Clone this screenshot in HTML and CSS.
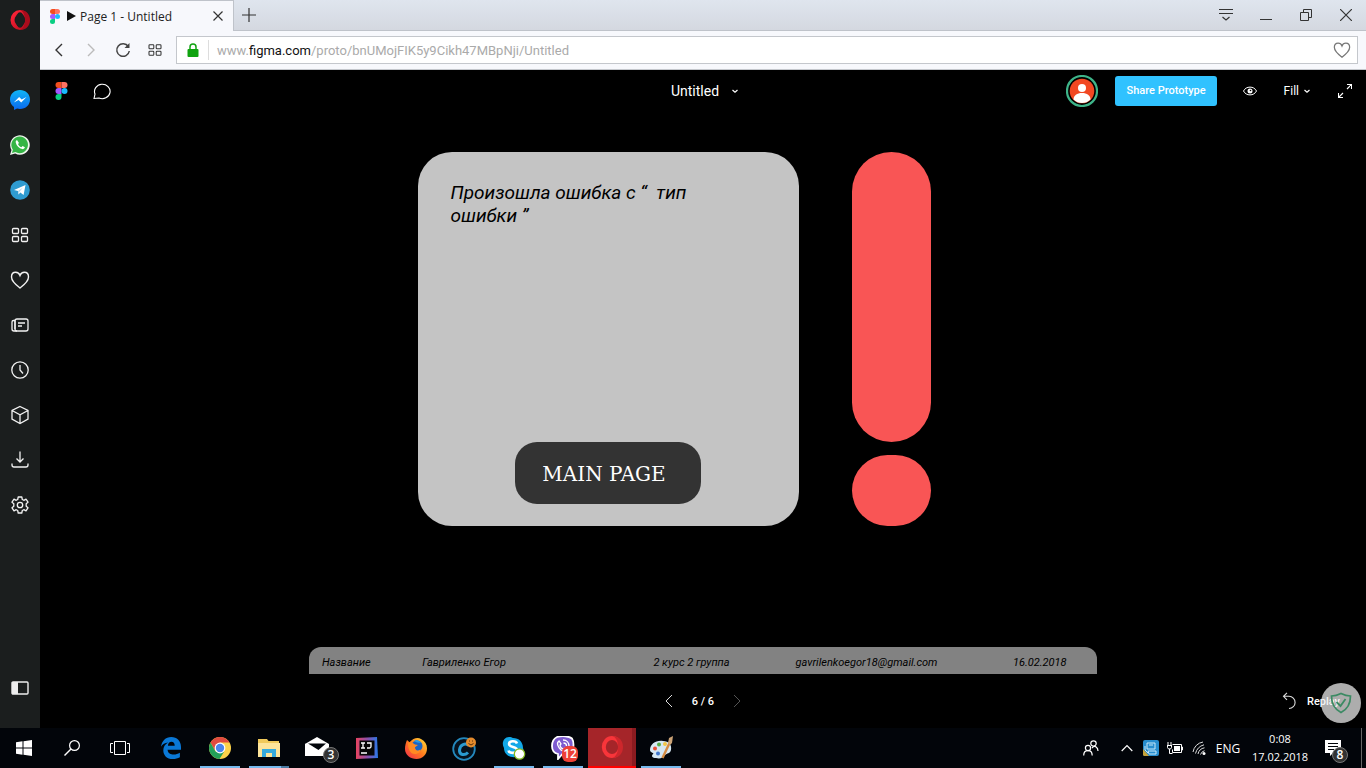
FILE: index.html
```
<!DOCTYPE html>
<html lang="ru">
<head>
<meta charset="utf-8">
<meta name="viewport" content="width=device-width, initial-scale=1">
<title>Page 1 - Untitled</title>
<link rel="stylesheet" href="styles.css">
</head>
<body>
<svg class="defs" aria-hidden="true">
  <defs>
    <linearGradient id="opera-ring" x1="0" y1="0" x2="1" y2="1"><stop offset="0" stop-color="#ff2438"/><stop offset="1" stop-color="#b80b1d"/></linearGradient>
    <linearGradient id="messenger" x1="0" y1="0" x2="0" y2="1"><stop offset="0" stop-color="#10b5f5"/><stop offset="1" stop-color="#0a68f0"/></linearGradient>
    <linearGradient id="ij" x1="0" y1="0" x2="1" y2="0"><stop offset="0" stop-color="#e8435f"/><stop offset=".5" stop-color="#8f4fa8"/><stop offset="1" stop-color="#2878e8"/></linearGradient>
    <linearGradient id="fox" x1="0" y1="1" x2="1" y2="0"><stop offset="0" stop-color="#f0284e"/><stop offset=".5" stop-color="#ff7a1e"/><stop offset="1" stop-color="#ffe23a"/></linearGradient>
    <symbol id="figma" viewBox="0 0 12 18">
      <path d="M3 0h3v6H3a3 3 0 0 1 0-6z" fill="#f24e1e"/><path d="M6 0h3a3 3 0 0 1 0 6H6z" fill="#ff7262"/>
      <path d="M3 6h3v6H3a3 3 0 0 1 0-6z" fill="#a259ff"/><circle cx="9" cy="9" r="3" fill="#1abcfe"/>
      <path d="M3 12h3v3a3 3 0 1 1-3-3z" fill="#0acf83"/>
    </symbol>
    <symbol id="down" viewBox="0 0 8 8"><path d="M1.500 3l2.500 2.300L6.500 3" fill="none" stroke="currentColor" stroke-width="1.200"/></symbol>
    <symbol id="heart" viewBox="0 0 20 20"><path d="M10 18C6 15 1.500 11.500 1.500 7c0-2.800 1.800-4.700 4.200-4.700 2 0 3.600 1.200 4.300 3.200.7-2 2.300-3.200 4.300-3.200 2.400 0 4.200 1.900 4.200 4.700 0 4.500-4.500 8-8.500 11z" fill="none" stroke="currentColor" stroke-width="1.400"/></symbol>
    <symbol id="tiles" viewBox="0 0 20 20"><g fill="none" stroke="currentColor" stroke-width="1.300"><rect x="2.500" y="3.500" width="6" height="5" rx="1"/><rect x="11.500" y="3.500" width="6" height="5" rx="1"/><rect x="2.500" y="11.500" width="6" height="5" rx="1"/><rect x="11.500" y="11.500" width="6" height="5" rx="1"/></g></symbol>
  </defs>
</svg>

<div class="window">
  <aside class="sidebar">
    <button class="side-logo" aria-label="Opera"><svg width="20" height="20" viewBox="0 0 20 20"><ellipse cx="10" cy="10" rx="7.500" ry="8" fill="none" stroke="url(#opera-ring)" stroke-width="4"/><path d="M10 0c6 0 10 4 10 10s-4 10-10 10c3-1 5-5 5-10s-2-9-5-10z" fill="#a90c1c"/><ellipse cx="10" cy="10" rx="4.200" ry="7.800" fill="#1b1e1e"/></svg></button>
    <nav class="side-nav">
      <button aria-label="Messenger"><svg width="20" height="20" viewBox="0 0 20 20"><path d="M10 0c5.700 0 10 4.100 10 9.500S15.700 19 10 19c-1 0-2-.1-2.900-.4L4 20v-2.900C1.500 15.300 0 12.600 0 9.500 0 4.100 4.300 0 10 0z" fill="url(#messenger)"/><path d="M3.800 12.500l5.300-5.600 2.600 2.500 4.800-2.500-5.300 5.600-2.600-2.600z" fill="#fff"/></svg></button>
      <button aria-label="WhatsApp"><svg width="20" height="20" viewBox="0 0 20 20"><path d="M0 20l1.500-5A9.800 9.800 0 1 1 5.200 18.600z" fill="#eef5ec"/><path d="M1.900 18.100l1-3.400A8.300 8.300 0 1 1 5.400 17z" fill="#35b545"/><path d="M7 5c-1 .4-1.500 1.500-1.200 2.800.8 3.200 3.200 5.500 6.400 6.300 1.200.2 2.500-.5 2.700-1.800l-2.300-1.300-1.200 1.200C9.700 11.500 8.500 10.300 8 8.900l1-1z" fill="#fff"/></svg></button>
      <button aria-label="Telegram"><svg width="20" height="20" viewBox="0 0 20 20"><circle cx="10" cy="10" r="9.800" fill="#2f9bd0"/><path d="M4 9.900L15.500 5l-1.900 10-3.300-2.400-1.800 1.900-.5-3.400z" fill="#fff"/><path d="M8 11.100l5-3.600-3.500 4.200-1 2.800z" fill="#b5d7ea"/></svg></button>
      <button aria-label="Speed Dial"><svg width="20" height="20"><use href="#tiles"/></svg></button>
      <button aria-label="Bookmarks"><svg width="20" height="20"><use href="#heart"/></svg></button>
      <button aria-label="News"><svg class="line" width="20" height="20" viewBox="0 0 20 20"><rect x="5" y="4" width="13" height="12" rx="2"/><path d="M5 5.500H3.500a1.500 1.500 0 0 0-1.500 1.500v7a2 2 0 0 0 2 2h3M5 5.500V14M8 8h7M8 11h4"/></svg></button>
      <button aria-label="History"><svg class="line" width="20" height="20" viewBox="0 0 20 20"><circle cx="10" cy="10" r="8.200"/><path d="M10 5v5l3 3.500"/></svg></button>
      <button aria-label="Extensions"><svg class="line" width="20" height="20" viewBox="0 0 20 20"><path d="M10 1.500l8 4v8.500l-8 4.500-8-4.500V5.500zM2 5.500l8 4.300 8-4.300M10 9.800v8.700"/></svg></button>
      <button aria-label="Downloads"><svg class="line" width="20" height="20" viewBox="0 0 20 20"><path d="M10 1.500v10M6.500 8.500L10 12l3.500-3.500M2 13.500V15a2 2 0 0 0 2 2h12a2 2 0 0 0 2-2v-1.500"/></svg></button>
      <button aria-label="Settings"><svg class="line" width="20" height="20" viewBox="0 0 20 20"><path d="M8.200 2h3.600l.5 2.500 1.500.8L16 4.200l2 3-1.800 1.500v2.600L18 12.800l-2 3-2.200-1.100-1.500.8-.5 2.500H8.200l-.5-2.500-1.500-.8L4 15.800l-2-3 1.800-1.500V8.700L2 7.200l2-3 2.200 1.100 1.500-.8z" stroke-linejoin="round"/><circle cx="10" cy="10" r="2.700"/></svg></button>
    </nav>
    <button class="side-toggle" aria-label="Toggle sidebar"><svg width="20" height="16" viewBox="0 0 20 16"><rect x="2" y="2" width="16" height="12" rx="1" fill="none" stroke="#eee" stroke-width="1.400"/><path d="M2 2h6v12H2z" fill="#eee"/></svg></button>
  </aside>

  <main class="browser">
    <div class="tab-strip">
      <div class="tab">
        <svg width="10" height="15"><use href="#figma"/></svg>
        <svg class="play" width="10" height="10" viewBox="0 0 10 10"><path d="M1 0l9 5-9 5z" fill="#111"/></svg>
        <span class="tab-title">Page 1 - Untitled</span>
        <button aria-label="Close tab"><svg width="10" height="10" viewBox="0 0 10 10"><path d="M.5.5l9 9m0-9l-9 9" stroke="#333" stroke-width="1.200"/></svg></button>
      </div>
      <button class="new-tab" aria-label="New tab"><svg width="14" height="14" viewBox="0 0 14 14"><path d="M7 0v14M0 7h14" stroke="#333" stroke-width="1.200"/></svg></button>
      <div class="window-buttons">
        <button aria-label="Tab menu"><svg width="14" height="14" viewBox="0 0 14 14"><path d="M0 1.500h14M0 5.500h14M3.500 9L7 12l3.500-3" fill="none" stroke="#333" stroke-width="1.200"/></svg></button>
        <button aria-label="Minimize"><svg width="12" height="12" viewBox="0 0 12 12"><path d="M0 10.500h12" stroke="#333"/></svg></button>
        <button aria-label="Restore"><svg width="12" height="12" viewBox="0 0 12 12"><path d="M.5 3.500h8v8h-8zM3.500 3.500v-3h8v8h-3" fill="none" stroke="#333"/></svg></button>
        <button aria-label="Close"><svg width="12" height="12" viewBox="0 0 12 12"><path d="M0 0l12 12M12 0L0 12" stroke="#333" stroke-width="1.200"/></svg></button>
      </div>
    </div>
    <div class="toolbar">
      <button aria-label="Back"><svg width="16" height="16" viewBox="0 0 16 16"><path d="M11 2L5 8l6 6" fill="none" stroke="#333" stroke-width="1.400"/></svg></button>
      <button aria-label="Forward" disabled><svg width="16" height="16" viewBox="0 0 16 16"><path d="M5 2l6 6-6 6" fill="none" stroke="#bbb" stroke-width="1.400"/></svg></button>
      <button aria-label="Reload"><svg width="16" height="16" viewBox="0 0 16 16"><path d="M13.300 4.500A6.300 6.300 0 1 0 14.300 9" fill="none" stroke="#444" stroke-width="1.500"/><path d="M14.500 1v5h-5z" fill="#444"/></svg></button>
      <button aria-label="Speed Dial"><svg width="16" height="16"><use href="#tiles"/></svg></button>
      <div class="address">
        <svg class="lock" width="12" height="14" viewBox="0 0 12 14"><path d="M3 7V4a3 3 0 0 1 6 0v3" fill="none" stroke="#12a312" stroke-width="1.500"/><rect x=".5" y="6" width="11" height="8" rx="1" fill="#0fa30f"/></svg>
        <div class="url">
          <span class="url-text">www.<b>figma.com</b>/proto/bnUMojFIK5y9Cikh47MBpNji/Untitled</span>
          <input type="text" aria-label="Address">
        </div>
        <button aria-label="Add to bookmarks"><svg width="18" height="18"><use href="#heart"/></svg></button>
      </div>
    </div>

    <section class="prototype">
      <header class="proto-header">
        <div class="proto-left">
          <button aria-label="Figma"><svg width="13" height="18"><use href="#figma"/></svg></button>
          <button aria-label="Comments"><svg width="18" height="17" viewBox="0 0 18 17"><path d="M1 15.500l1-4.500A7.800 7.200 0 1 1 6 15z" fill="none" stroke="#fff" stroke-width="1.100"/></svg></button>
        </div>
        <button class="proto-title">Untitled <svg width="8" height="8"><use href="#down"/></svg></button>
        <div class="proto-right">
          <button class="avatar" aria-label="Account"><svg width="32" height="32" viewBox="0 0 32 32"><circle cx="16" cy="16" r="15" fill="#000" stroke="#3eb489" stroke-width="2.200"/><circle cx="16" cy="16" r="12.300" fill="#f24822"/><circle cx="16" cy="13" r="4" fill="#fff"/><path d="M7.500 24.500c0-4 3.500-6.500 8.500-6.500s8.500 2.500 8.500 6.500a12 12 0 0 1-17 0z" fill="#fff"/></svg></button>
          <button class="share">Share Prototype</button>
          <button class="eye" aria-label="View options"><svg width="14" height="10" viewBox="0 0 14 10"><path d="M.5 5C3-.2 11-.2 13.500 5 11 10.200 3 10.200.5 5z" fill="none" stroke="#fff"/><circle cx="7" cy="5" r="2.500" fill="#fff"/><circle cx="7.500" cy="4.500" r=".8" fill="#000"/></svg></button>
          <button class="fill">Fill <svg width="8" height="8"><use href="#down"/></svg></button>
          <button class="expand" aria-label="Full screen"><svg width="14" height="14" viewBox="0 0 14 14"><path d="M9 .5h4.500V5M13.500.5L9 5M5 13.500H.5V9M.5 13.500L5 9" fill="none" stroke="#fff" stroke-width="1.100"/></svg></button>
        </div>
      </header>

      <div class="canvas">
        <div class="frame">
          <div class="error">
            <div class="card">
              <p>Произошла ошибка с “&nbsp; тип<br>ошибки ”</p>
              <button class="main-page">MAIN PAGE</button>
            </div>
            <div class="mark" role="img" aria-label="!"><span class="mark-stem"></span><span class="mark-dot"></span></div>
          </div>
          <footer class="credits">
            <span>Название</span>
            <span>Гавриленко Егор</span>
            <span>2 курс 2 группа</span>
            <span>gavrilenkoegor18@gmail.com</span>
            <span>16.02.2018</span>
          </footer>
        </div>
      </div>

      <footer class="proto-footer">
        <div class="pager">
          <button aria-label="Previous"><svg width="8" height="14" viewBox="0 0 8 14"><path d="M7 1L1 7l6 6" fill="none" stroke="#ddd"/></svg></button>
          <span>6 / 6</span>
          <button aria-label="Next" disabled><svg width="8" height="14" viewBox="0 0 8 14"><path d="M1 1l6 6-6 6" fill="none" stroke="#555"/></svg></button>
        </div>
        <button class="replay"><svg width="14" height="18" viewBox="0 0 14 18"><path d="M5 .8L1.500 4.300 5 7.800M1.500 4.300H7a6 6 0 0 1 0 12.200" fill="none" stroke="#ddd" stroke-width="1.100"/></svg> Replay</button>
        <button class="guard" aria-label="Protection"><svg width="22" height="22" viewBox="0 0 22 22"><path d="M1.500 4C5 4 8 3 11 1.500 14 3 17 4 20.500 4c0 8-2.500 13-9.500 16.500C4 17 1.500 12 1.500 4z" fill="none" stroke="#3b8a63" stroke-width="1.700"/><path d="M6.500 10l4 4 5-7" fill="none" stroke="#3b8a63" stroke-width="1.800"/></svg></button>
      </footer>
    </section>
  </main>
</div>

<footer class="taskbar">
  <div class="system">
    <button aria-label="Start"><svg width="16" height="16" viewBox="0 0 16 16"><path d="M0 2.200l6.500-.9v6.200H0zM7.500 1.200L16 0v7.500H7.500zM0 8.500h6.500v6.200L0 13.800zM7.500 8.500H16V16l-8.500-1.200z" fill="#fff"/></svg></button>
    <button aria-label="Search"><svg width="16" height="16" viewBox="0 0 16 16"><circle cx="10.500" cy="5.500" r="4.900" fill="none" stroke="#fff" stroke-width="1.200"/><path d="M7 9L.5 15.500" stroke="#fff" stroke-width="1.400"/></svg></button>
    <button aria-label="Task view"><svg width="20" height="14" viewBox="0 0 20 14"><path d="M4.500.5h11v13h-11zM3 2.500H.5v9H3M17 2.500h2.500v9H17" fill="none" stroke="#fff"/></svg></button>
  </div>
  <div class="apps">
    <button aria-label="Edge"><svg width="20" height="22" viewBox="0 0 20 22"><path d="M0 9.700C.8 4 4.500 0 10.300 0 16 0 20 4 20 10v2.700H6.600c.2 3.700 3.300 4.800 6 4.800 2.300 0 4.400-.6 6.300-1.800v4.500C16.800 21.400 14.500 22 11.700 22 6 22 2.300 18.500 2.300 13.200c0-3.200 1.700-6 4.800-7.700C4 5.700 1.500 7.200 0 9.700zm6.900-.9h6.800c0-2.700-1.200-4-3.300-4-2 0-3.200 1.600-3.500 4z" fill="#0a78d6"/></svg></button>
    <button class="open" aria-label="Chrome"><svg width="22" height="22" viewBox="0 0 22 22"><circle cx="11" cy="11" r="11" fill="#fcd24a"/><path d="M1.500 5.500A11 11 0 0 1 20.500 5.500H11L6.200 13.700z" fill="#e04a3f"/><path d="M1.500 5.500A11 11 0 0 0 10.500 22l4.700-7.500H6.500z" fill="#23a059"/><circle cx="11" cy="11" r="5.400" fill="#fff"/><circle cx="11" cy="11" r="4.200" fill="#4a84ec"/></svg></button>
    <button class="open stacked" aria-label="Explorer"><svg width="22" height="19" viewBox="0 0 22 19"><path d="M0 0h9l1.500 2H21v16H0z" fill="#f0c95b"/><path d="M0 4h22v14H0z" fill="#fde49a"/><path d="M4 18v-8h14v8h-4v-4H8v4z" fill="#35aadd"/></svg></button>
    <button aria-label="Mail"><svg width="26" height="22" viewBox="0 0 26 22"><path d="M0 7l12-7 12 7v12H0z" fill="#fff"/><path d="M3 6.500h18L13.500 13z" fill="#02050a"/><path d="M0 7l15 10" stroke="#fff"/></svg><span class="badge gray">3</span></button>
    <button aria-label="IntelliJ IDEA"><svg width="22" height="22" viewBox="0 0 22 22"><path d="M0 1l21-1 1 21-22 1z" fill="url(#ij)"/><path d="M3.500 3.500h15v15h-15z" fill="#060606"/><path d="M5 6h4M7 6v5M5 11h4M11 6h4v3.500c0 1-.5 1.500-1.500 1.500H11M5 16h6" fill="none" stroke="#fff" stroke-width="1.300"/></svg></button>
    <button aria-label="Firefox"><svg width="22" height="22" viewBox="0 0 22 22"><path d="M2 3l2.500 2.300C8 1 13 0 16 2c4 2 6 5.500 6 9.500C22 17.500 17.500 22 11.500 22S0 18 0 12c0-3 .7-6 2-9z" fill="url(#fox)"/><circle cx="12" cy="9" r="5.500" fill="#1a64c4"/><path d="M3 6c3-1 5 0 7 1.500l3 .5-3 2.300c0 3 2.500 4.200 5.500 2.200 0 3-3 4.500-5.500 4.500-5 0-7-5-7-11z" fill="#ff8a22"/><path d="M9 4c2-2 5-1 7 2l-4-.5z" fill="#2a9ce6"/></svg></button>
    <button aria-label="CCleaner"><svg width="26" height="26" viewBox="0 0 26 26"><circle cx="12" cy="14" r="10.800" fill="#06121e" stroke="#2488bd" stroke-width="1.800"/><path d="M16.500 10.500c-3-3-8.500-1-9 4.500-.3 5 5 6 8.500 2.500" fill="none" stroke="#2a9ad0" stroke-width="3"/><circle cx="19" cy="7.500" r="5" fill="#e38a2c"/><path d="M16.500 8.500q2.500 3 5 0M17 6h1m2 0h1" fill="none" stroke="#57300c"/></svg></button>
    <button class="open" aria-label="Skype"><svg width="24" height="24" viewBox="0 0 24 24"><path d="M7 1c2 0 3 .5 4 1 6 0 10 4 10 10 2 6-2 10-7 9C7 22 2 18 2 12-1 7 2 1 7 1z" fill="#12a8e8"/><path d="M15 7.500c-1-3-8-3-8 .5 0 4 8 2 8 6 0 4-8 3.500-8.500.5" fill="none" stroke="#fff" stroke-width="2.600"/><circle cx="17.500" cy="18" r="5.200" fill="#fff" stroke="#83b922" stroke-width="1.300"/></svg></button>
    <button class="open" aria-label="Viber"><svg width="24" height="24" viewBox="0 0 24 24"><path d="M6 1C11-.5 18 0 21 2.500c2 3 2 10 0 13-3 3-8 3-10 3L7 23v-5C3 17 1 14 1 10S2 3 6 1z" fill="#7d5bd0" stroke="#fff" stroke-width="1.800"/><path d="M8 5c-3 2-1 6 2 9 3 2 5 3 7 1l-3-3-2 1c-2-1-3-3-3-4l1-1zM12 4c4 0 6 3 6 6M12.500 7c2 0 3 1 3 3" fill="none" stroke="#fff" stroke-width="1.300"/></svg><span class="badge red">12</span></button>
    <button class="active" aria-label="Opera"><svg width="22" height="22" viewBox="0 0 22 22"><ellipse cx="11" cy="11" rx="8.200" ry="9" fill="none" stroke="#f8353a" stroke-width="4"/><path d="M11 0c7 0 11 4.500 11 11s-4 11-11 11c4-1 6-5.500 6-11S15 1 11 0z" fill="#cd272c"/></svg></button>
    <button class="open" aria-label="Paint"><svg width="24" height="24" viewBox="0 0 24 24"><path d="M1 14C1 8 7 4 14 5c6 0 9 4 8 9-1 4-4 3-6 5-2 3-5 4-9 3-4 0-5-2-3-4 2-1-3-1-3-4z" fill="#d6e8f3"/><circle cx="6" cy="12.500" r="2" fill="#e65037"/><circle cx="10" cy="8.500" r="2" fill="#55ae4a"/><circle cx="16" cy="8" r="2" fill="#f3c545"/><circle cx="9" cy="17.500" r="2" fill="#4078ce"/><path d="M13.500 22L21 6" stroke="#d58b42" stroke-width="2.400"/><path d="M19 7l1-5 4-2-1 7-2 2z" fill="#cca477"/></svg></button>
  </div>
  <div class="tray">
    <button class="people" aria-label="People"><svg width="16" height="16" viewBox="0 0 16 16"><g fill="none" stroke="#fff" stroke-width="1.200"><circle cx="10.500" cy="3.500" r="2.700"/><circle cx="5" cy="8" r="2.600"/><path d="M.7 15.500c0-6.500 8.500-6.500 8.500 0M9 8c3-3.300 6-.5 6 3"/></g></svg></button>
    <button aria-label="Show hidden icons"><svg width="12" height="8" viewBox="0 0 12 8"><path d="M.7 7L6 1.500 11.300 7" fill="none" stroke="#fff" stroke-width="1.200"/></svg></button>
    <button aria-label="Display"><svg width="16" height="16" viewBox="0 0 16 16"><rect width="16" height="16" rx="2" fill="#278ed0"/><path d="M0 9l6 7H1l-1-1z" fill="#c6a33a"/><path d="M4 3h8v6H4zM6 5h4M5 11h8v3H6zM2 6v4l3 3" fill="none" stroke="#c9e9fa"/></svg></button>
    <button aria-label="Battery"><svg width="16" height="12" viewBox="0 0 16 12"><path d="M5.500 2.500h9v8h-9v-3M14.500 5h1v3h-1M0 3.500h5M1 0v3m3-3v3M.5 3.500v2l1 1.500h2l1-1.500v-2M2.500 7v4.500h3" fill="none" stroke="#fff"/><path d="M7 4h6v5H7z" fill="#fff"/></svg></button>
    <button aria-label="Wi-Fi"><svg width="14" height="14" viewBox="0 0 14 14"><g fill="none" stroke="#ddd"><path d="M1 11A12 12 0 0 1 11 1M3.500 12.500A12 12 0 0 1 12 3.800M6 13A8 8 0 0 1 12.500 6.800M8.500 13.500A6 6 0 0 1 12.500 9.700"/></g><circle cx="12" cy="12.500" r="1.500" fill="#fff"/></svg></button>
    <button class="lang">ENG</button>
    <button class="clock"><span>0:08</span><span>17.02.2018</span></button>
    <button class="notices" aria-label="Notifications"><svg width="16" height="16" viewBox="0 0 16 16"><path d="M0 0h16v13H8l-3 3v-3H0z" fill="#fff"/><path d="M3 3.500h10M3 6.500h10M3 9.500h6" stroke="#02050a" stroke-width="1.200"/></svg><span class="badge gray">8</span></button>
    <button class="show-desktop" aria-label="Show desktop"></button>
  </div>
</footer>
</body>
</html>
```

FILE: styles.css
```
* { box-sizing: border-box; }

body {
  margin: 0;
  height: 100vh;
  display: flex;
  flex-direction: column;
  background: #000;
  color: #fff;
  font-family: Roboto, "Liberation Sans", sans-serif;
  font-size: 11px;
  overflow: hidden;
}

button {
  display: flex;
  align-items: center;
  justify-content: center;
  margin: 0;
  padding: 0;
  border: 0;
  background: none;
  color: inherit;
  font: inherit;
}

svg { display: block; flex: none; }

.defs { position: absolute; width: 0; height: 0; }
.line { fill: none; stroke: currentColor; stroke-width: 1.3; }

.window { flex: 1; min-height: 0; display: flex; }

/* Sidebar */
.sidebar {
  width: 40px;
  display: flex;
  flex-direction: column;
  padding-bottom: 18px;
  background: #1b1e1e;
  color: #f2f2f2;
}
.side-logo { height: 40px; margin-bottom: 37px; }
.side-nav { display: flex; flex-direction: column; }
.side-nav button, .side-toggle { height: 45px; }
.side-toggle { margin-top: auto; }

/* Browser chrome */
.browser { flex: 1; min-width: 0; display: flex; flex-direction: column; }

.tab-strip {
  height: 31px;
  display: flex;
  background: linear-gradient(#dfe5ee, #d4d8e0);
  border-bottom: 1px solid #bfc3ca;
  color: #222;
}
.tab {
  width: 194px;
  height: 31px;
  display: flex;
  align-items: center;
  padding: 0 10px;
  background: #f7f8fc;
  border: 1px solid #bfc3ca;
  border-width: 1px 1px 0 0;
}
.play { margin: 0 4px 0 6px; }
.tab-title { flex: 1; font: 12px "Open Sans", "Noto Sans", sans-serif; }
.new-tab { width: 30px; }
.window-buttons { display: flex; margin-left: auto; }
.window-buttons button { width: 40px; }

.toolbar {
  height: 39px;
  display: flex;
  align-items: center;
  padding: 0 8px 0 3px;
  background: #f7f8fc;
  border-bottom: 1px solid #c4c7cc;
  color: #333;
}
.toolbar > button { width: 32px; height: 32px; }
.address {
  flex: 1;
  height: 28px;
  display: flex;
  align-items: center;
  margin-left: 5px;
  padding: 0 6px 0 10px;
  background: #fff;
  border: 1px solid #c4c7cc;
}
.url {
  flex: 1;
  display: grid;
  align-items: center;
  height: 20px;
  margin-left: 9px;
  padding-left: 8px;
  border-left: 1px solid #ddd;
}
.url > * { grid-area: 1 / 1; }
.url-text { color: #aaa; font-size: 13px; }
.url-text b { color: #111; font-weight: 400; }
.url input { width: 100%; height: 20px; padding: 0; border: 0; outline: 0; background: transparent; }
.address button { color: #777; }

/* Prototype viewer */
.prototype { flex: 1; min-height: 0; display: flex; flex-direction: column; }

.proto-header {
  height: 42px;
  display: grid;
  grid-template-columns: 1fr auto 1fr;
  align-items: center;
  padding: 0 14px;
}
.proto-left { display: flex; align-items: center; gap: 25px; padding-left: 1px; }
.proto-title { gap: 12px; padding-left: 4px; font-size: 14px; }
.proto-right { display: flex; align-items: center; justify-content: flex-end; }
.share {
  height: 30px;
  margin: 0 26px 0 17px;
  padding: 0 11px 2px 12px;
  border-radius: 3px;
  background: #30c2ff;
  font-weight: 500;
}
.fill { gap: 4px; margin: 0 27px; font-size: 12px; }

.canvas { flex: 1; min-height: 0; display: flex; justify-content: center; overflow: hidden; }
.frame { width: 100%; max-width: 788px; display: flex; flex-direction: column; }
.error { display: flex; justify-content: center; gap: 53px; padding: 40px 58px 0 0; }
.card {
  width: 381px;
  min-height: 374px;
  display: flex;
  flex-direction: column;
  align-items: center;
  justify-content: space-between;
  padding: 29px 33px 22px;
  border-radius: 34px;
  background: #c4c4c4;
  color: #000;
}
.card p { align-self: stretch; margin: 0; font-size: 19px; font-style: italic; line-height: 23px; }
.main-page {
  height: 62px;
  padding: 2px 35px 0 27px;
  border-radius: 22px;
  background: #333;
  color: #fff;
  font: 20px "DejaVu Serif", serif;
}
.mark { width: 79px; display: flex; flex-direction: column; gap: 13px; }
.mark-stem { flex: 1; border-radius: 40px; background: #f95555; }
.mark-dot { height: 71px; border-radius: 36px; background: #f95555; }

.credits {
  height: 27px;
  display: grid;
  grid-template-columns: 100fr 231fr 142fr 217fr 84fr;
  align-items: center;
  margin-top: auto;
  padding: 4px 0 0 13px;
  border-radius: 12px 12px 0 0;
  background: #828282;
  color: #000;
  font-style: italic;
}

.proto-footer {
  position: relative;
  height: 54px;
  display: grid;
  grid-template-columns: 1fr auto 1fr;
  align-items: center;
  padding: 0 26px;
}
.pager { grid-column: 2; display: flex; align-items: center; gap: 19px; font-weight: 500; }
.replay { justify-self: end; gap: 11px; font-weight: 500; }
.guard {
  position: absolute;
  right: 5px;
  bottom: 5px;
  width: 40px;
  height: 40px;
  border-radius: 50%;
  background: rgba(240, 240, 240, 0.72);
}

/* Taskbar */
.taskbar {
  height: 40px;
  display: flex;
  background: #02050a;
  font-family: "Open Sans", "Noto Sans", sans-serif;
}
.system, .apps, .tray { display: flex; }
.system button, .apps button { position: relative; width: 48px; height: 40px; }
.apps { gap: 1px; margin-left: 3px; }
.apps .open::after {
  content: "";
  position: absolute;
  right: 4px;
  bottom: 0;
  left: 4px;
  height: 2px;
  background: #76b9ed;
}
.apps .stacked::after { border-right: 8px solid #4a7ba2; }
.apps .active {
  background: linear-gradient(to right, #a52529 44px, #8b1b20 44px);
  border-bottom: 2px solid #f00;
}

.badge {
  position: absolute;
  right: 3px;
  bottom: 5px;
  width: 16px;
  height: 16px;
  border-radius: 50%;
  font-size: 12px;
  font-weight: 600;
  line-height: 14px;
  text-align: center;
}
.gray { background: #333; border: 1px solid #777; }
.red { right: 9px; bottom: 6px; background: #ef4036; border-radius: 6px; line-height: 16px; }

.tray { margin-left: auto; align-items: center; }
.tray > button { width: 24px; height: 40px; }
.tray .people { width: 36px; margin-right: 6px; }
.tray .lang { width: 34px; font-size: 12px; }
.tray .clock { width: 70px; flex-direction: column; line-height: 18px; }
.tray .notices { position: relative; width: 36px; }
.tray .show-desktop { width: 5px; margin-left: 10px; border-left: 1px solid #666; }
```
